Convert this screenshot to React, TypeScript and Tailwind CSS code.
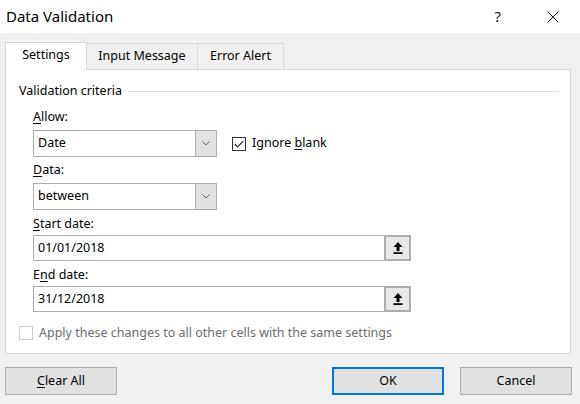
import type { ReactNode } from 'react'

// Excel "Data Validation" dialog, Settings tab.

const FONT = { fontFamily: '"Noto Sans", "Open Sans", sans-serif' }

function Checkbox({ checked, disabled }: { checked?: boolean; disabled?: boolean }) {
  return (
    <span
      className={`flex h-[14px] w-[14px] items-center justify-center border bg-white ${
        disabled ? 'border-[#cccccc]' : 'border-[#333333]'
      }`}
    >
      {checked && (
        <svg width="10" height="8" viewBox="0 0 10 8" fill="none">
          <path d="M0.8 4 L3.6 6.8 L9.2 1.2" stroke="#222" strokeWidth="1.2" />
        </svg>
      )}
    </span>
  )
}

// ラベル: アクセスキーの文字に下線を付ける
function Label({ pre, u, post, className = '' }: { pre?: string; u: string; post?: string; className?: string }) {
  return (
    <div className={`h-4 text-[12.5px] leading-4 text-black ${className}`}>
      {pre}
      <span className="underline underline-offset-2">{u}</span>
      {post}
    </div>
  )
}

function Combo({ value, className = '' }: { value: string; className?: string }) {
  return (
    <div className={`flex h-[27px] w-[184px] border border-[#adadad] bg-white ${className}`}>
      <div className="flex flex-1 items-center pl-[4px] text-[12.5px] text-black">{value}</div>
      <div className="flex w-[21px] items-center justify-center border-l border-[#adadad] bg-[#e1e1e1]">
        <svg width="8" height="5" viewBox="0 0 8 5" fill="none">
          <path d="M0.5 0.5 L4 4 L7.5 0.5" stroke="#606060" strokeWidth="1" />
        </svg>
      </div>
    </div>
  )
}

function RefInput({ value, className = '' }: { value: string; className?: string }) {
  return (
    <div className={`flex h-[26px] w-[378px] border border-[#adadad] bg-white ${className}`}>
      <div className="flex flex-1 items-center pl-[4px] text-[12.5px] text-black">{value}</div>
      <div className="-my-px -mr-px flex w-[27px] items-center justify-center border-2 border-[#adadad] bg-[#e8e8e8]">
        <svg width="10" height="12" viewBox="0 0 10 12">
          <path d="M5 0 L9.5 5 L6.5 5 L6.5 9 L3.5 9 L3.5 5 L0.5 5 Z" fill="#000" />
          <rect x="0.5" y="10.2" width="9" height="1.8" fill="#000" />
        </svg>
      </div>
    </div>
  )
}

function Tab({ children, active }: { children: ReactNode; active?: boolean }) {
  return active ? (
    <div className="relative z-10 -mb-px flex h-[28px] w-[82px] items-center justify-center border border-b-0 border-[#d9d9d9] bg-white pb-[2px] text-[12.5px] text-black">
      {children}
    </div>
  ) : (
    <div className="flex h-[26px] items-center justify-center border border-l-0 border-b-0 border-[#d9d9d9] bg-[#f0f0f0] text-[12.5px] text-black">
      {children}
    </div>
  )
}

function DialogButton({ children, primary }: { children: ReactNode; primary?: boolean }) {
  return (
    <button
      type="button"
      className={`flex h-[28px] w-[112px] items-center justify-center bg-[#e1e1e1] text-[12.5px] text-black ${
        primary ? 'border-2 border-[#0078d7]' : 'border border-[#adadad]'
      }`}
    >
      {children}
    </button>
  )
}

export default function App() {
  return (
    <div className="flex h-[404px] w-[580px] flex-col bg-[#f0f0f0]" style={FONT}>
      <div className="flex h-[33px] items-center bg-white pl-[6px]">
        <span className="text-[15px] text-black">Data Validation</span>
        <span className="ml-auto mr-[46px] text-[15px] text-[#222]">?</span>
        <svg className="mr-[21px]" width="12" height="12" viewBox="0 0 12 12" fill="none">
          <path d="M0.5 0.5 L11.5 11.5 M11.5 0.5 L0.5 11.5" stroke="#222" strokeWidth="1" />
        </svg>
      </div>

      <div className="flex flex-col px-[5px] pt-[9px]">
        <div className="flex items-end">
          <Tab active>Settings</Tab>
          <div className="w-[111px]">
            <Tab>Input Message</Tab>
          </div>
          <div className="w-[86px]">
            <Tab>Error Alert</Tab>
          </div>
        </div>

        <div className="flex h-[285px] w-[566px] flex-col border border-[#d9d9d9] bg-white pl-[13px] pr-[11px] pt-[13px]">
          <div className="flex h-4 items-center gap-[6px]">
            <span className="text-[12.5px] leading-4 text-black">Validation criteria</span>
            <div className="h-px flex-1 bg-[#dcdcdc]" />
          </div>

          <div className="flex flex-col pl-[14px]">
            <Label u="A" post="llow:" className="mt-[10px]" />
            <div className="mt-[5px] flex items-center">
              <Combo value="Date" />
              <div className="ml-[15px] flex items-center gap-[6px] text-[12.5px] text-black">
                <Checkbox checked />
                <span>
                  Ignore <span className="underline underline-offset-2">b</span>lank
                </span>
              </div>
            </div>
            <Label u="D" post="ata:" className="mt-[5px]" />
            <Combo value="between" className="mt-[5px]" />
            <Label u="S" post="tart date:" className="mt-[6px]" />
            <RefInput value="01/01/2018" className="mt-[3px]" />
            <Label pre="E" u="n" post="d date:" className="mt-[6px]" />
            <RefInput value="31/12/2018" className="mt-[3px]" />
          </div>

          <div className="mt-[12px] flex items-center gap-[6px]">
            <Checkbox disabled />
            <span className="text-[12.5px] text-[#6d6d6d]">Apply these changes to all other cells with the same settings</span>
          </div>
        </div>

        <div className="mt-[13px] flex">
          <DialogButton>
            <span>
              <span className="underline underline-offset-2">C</span>lear All
            </span>
          </DialogButton>
          <div className="ml-auto mr-[3px] flex gap-[16px]">
            <DialogButton primary>OK</DialogButton>
            <DialogButton>Cancel</DialogButton>
          </div>
        </div>
      </div>
    </div>
  )
}
